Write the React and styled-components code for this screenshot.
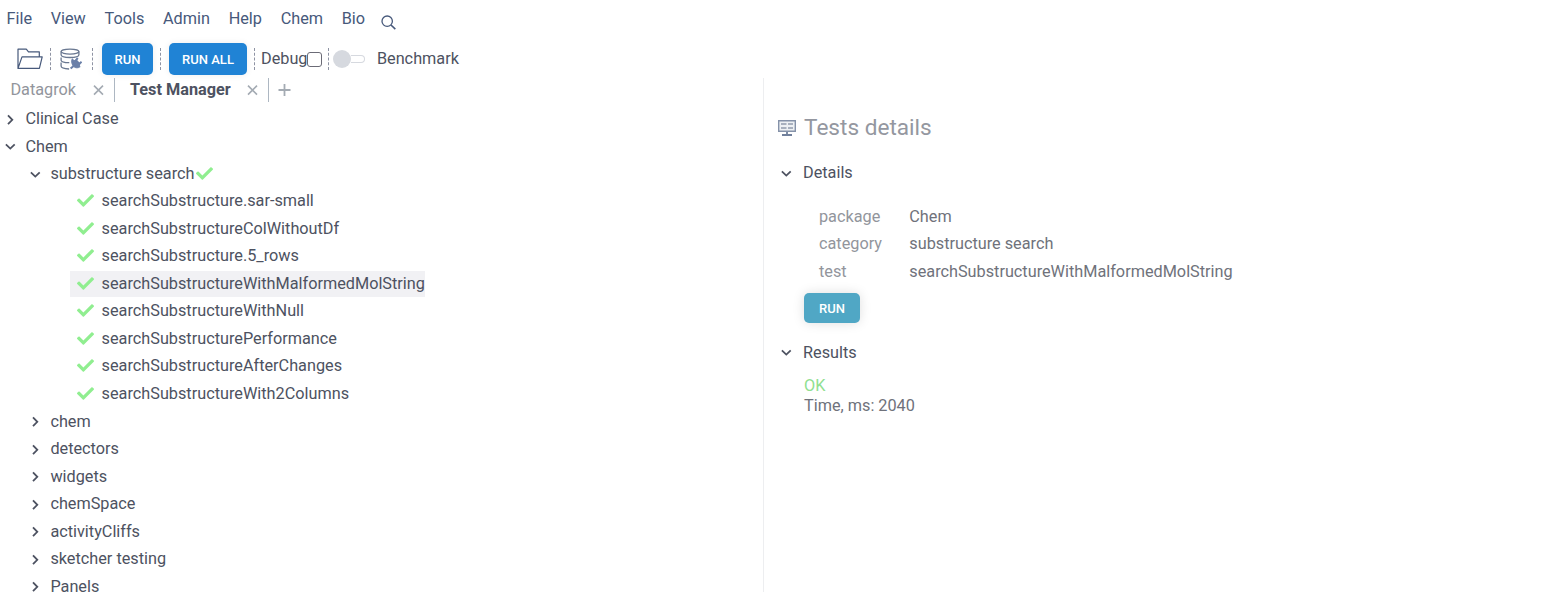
import React from 'react';
import styled, { createGlobalStyle } from 'styled-components';
import { FaCheck } from 'react-icons/fa';

const Global = createGlobalStyle`
  * { box-sizing: border-box; }
  body {
    margin: 0;
    background: #fff;
    color: #4d5261;
    font: 400 16.25px/20px Roboto, sans-serif;
    overflow: hidden;
  }
`;

const Page = styled.div`
  height: 592px;
  display: flex;
  flex-direction: column;
  overflow: hidden;
`;

const MenuBar = styled.nav`
  height: 37px;
  padding-left: 6.5px;
  display: flex;
  align-items: center;
  gap: 18.7px;
  color: #47597b;
`;

const SearchIcon = styled.svg`
  width: 15px;
  height: 15px;
  margin: 8px 0 0 -2.5px;
`;

const Toolbar = styled.div`
  height: 41px;
  padding: 3px 0 0 17px;
  display: flex;
  align-items: center;
`;

const Icon = styled.svg`
  flex: none;
  display: block;
  margin-left: ${(p) => p.$gap || 0}px;
`;

const Divider = styled.span`
  height: 22px;
  margin-left: ${(p) => p.$gap}px;
  border-left: 1px dashed #8e93a3;
`;

const Button = styled.button`
  height: ${(p) => p.$h || 32}px;
  width: ${(p) => p.$w}px;
  margin: ${(p) => p.$mt || 0}px 0 0 ${(p) => p.$gap || 0}px;
  padding: ${(p) => (p.$soft ? 2 : 1)}px 0 0;
  flex: none;
  border: 0;
  border-radius: 5px;
  background: ${(p) => p.$bg || '#2083d5'};
  color: #fff;
  font: 500 13px/16px Roboto, sans-serif;
  box-shadow: ${(p) => (p.$soft ? '0 0 12px rgba(0,0,0,.13)' : '0 0 7px rgba(0,0,0,.07)')};
`;

const ToolLabel = styled.span`
  margin-left: ${(p) => p.$gap}px;
`;

const CheckBox = styled.span`
  width: 15px;
  height: 15px;
  margin: 1px 0 0 -0.6px;
  border: 1px solid #6b6b76;
  border-radius: 3px;
`;

const Switch = styled.span`
  width: 32px;
  height: 18px;
  margin: 0 0 0 4px;
  display: flex;
  align-items: center;
`;

const Knob = styled.span`
  width: 18px;
  height: 18px;
  border-radius: 50%;
  background: #d6d9df;
`;

const Track = styled.span`
  width: 14px;
  height: 8px;
  border: 1px solid #d6d9df;
  border-left: 0;
  border-radius: 0 4px 4px 0;
`;

const Body = styled.div`
  flex: 1;
  display: flex;
  min-height: 0;
`;

const Left = styled.section`
  width: 764px;
  border-right: 1px solid #edeef0;
`;

const Tabs = styled.div`
  height: 27.4px;
  display: flex;
`;

const Tab = styled.div`
  width: ${(p) => p.$w}px;
  height: 24px;
  padding: 0 10px 0 ${(p) => p.$pl}px;
  display: flex;
  align-items: center;
  justify-content: space-between;
  border-right: 1px solid #adb7c2;
  color: ${(p) => (p.$active ? '#4d5261' : '#92959c')};
  font-weight: ${(p) => (p.$active ? 700 : 400)};
`;

const Row = styled.div`
  height: 27.53px;
  padding-left: ${(p) => p.$level * 25}px;
  display: flex;
  align-items: center;
  white-space: nowrap;
`;

const Arrow = styled.svg`
  width: 11px;
  height: 11px;
  margin: 0 ${(p) => p.$mr || 9.4}px 0 5px;
  flex: none;
  fill: none;
  stroke: #4d5261;
  stroke-width: 1.8;
`;

const Check = styled(FaCheck)`
  width: 17px;
  height: 17px;
  margin: 0 0 1px ${(p) => p.$gap || 0}px;
  flex: none;
  color: #90ee90;
`;

const Test = styled.div`
  height: 27.53px;
  width: max-content;
  margin-left: 70px;
  padding: 0 0 1px 6.6px;
  display: flex;
  align-items: center;
  gap: 8px;
  border-top: 1px solid #fff;
  border-bottom: 1px solid #fff;
  background: ${(p) => (p.$selected ? '#f1f1f4' : 'transparent')};
`;

const Details = styled.section`
  flex: 1;
  padding: 35px 0 0 14px;
`;

const Title = styled.h1`
  height: 30px;
  margin: 0;
  display: flex;
  align-items: center;
  gap: 8px;
  color: #9497a0;
  font: 400 22.6px/30px Roboto, sans-serif;
`;

const SectionHead = styled.div`
  height: 28px;
  margin-top: ${(p) => p.$mt}px;
  padding-left: 3px;
  display: flex;
  align-items: center;
  & > svg { margin-left: 0; }
`;

const Props = styled.dl`
  margin: 16px 0 0 41px;
  display: grid;
  grid-template-columns: 90.3px 1fr;
  grid-auto-rows: 27.5px;
  align-items: center;
`;

const Key = styled.dt`
  color: #92959c;
`;

const Value = styled.dd`
  margin: 0;
  color: #6f727b;
`;

const Result = styled.div`
  margin: 9px 0 0 26px;
  color: #6f727b;
`;

const Ok = styled.div`
  color: #90e090;
`;

const tests = [
  'searchSubstructure.sar-small',
  'searchSubstructureColWithoutDf',
  'searchSubstructure.5_rows',
  'searchSubstructureWithMalformedMolString',
  'searchSubstructureWithNull',
  'searchSubstructurePerformance',
  'searchSubstructureAfterChanges',
  'searchSubstructureWith2Columns',
];

const groups = ['chem', 'detectors', 'widgets', 'chemSpace', 'activityCliffs', 'sketcher testing', 'Panels'];

const Chevron = ({ open, mr }) => (
  <Arrow viewBox="0 0 11 11" $mr={mr}>
    <path d={open ? 'M.9 3.4l4.4 4.2L9.7 3.4' : 'M3 1.4l4.3 4.4L3 10.2'} />
  </Arrow>
);

const Close = () => (
  <Icon width="11" height="11" viewBox="0 0 11 11" stroke="#a4abb3" strokeWidth="1.6">
    <path d="M1 .6l9 9M10 .6l-9 9" />
  </Icon>
);

const FolderIcon = () => (
  <Icon width="26" height="22" viewBox="0 0 26 22" fill="none" stroke="#47597b" strokeWidth="1.2" strokeLinejoin="round">
    <path d="M1 20.4V1.2h8.3l2.2 2.6h10.8v5.1M1 20.4L5 8.9h20.2l-2.8 11.5z" />
  </Icon>
);

const DatabaseIcon = () => (
  <Icon $gap={9} width="22" height="23" viewBox="0 0 22 23" fill="none" stroke="#6a7891" strokeWidth="1.3">
    <ellipse cx="10" cy="3.6" rx="8.9" ry="2.5" />
    <path d="M1.1 3.6v3.2c0 1.6 3.2 2.7 8.9 2.7 5.4 0 8.9-1.2 8.9-2.7V3.6M1.1 9.4v2.8c0 1.4 3.2 2.4 8.2 2.5M1.1 14.6v3.4c0 1.6 3 2.8 8 3" />
    <path d="M12.2 10.8l8 7.8c-1.9 1.7-4.7 1.6-6.4 0-1.8-1.8-2.8-4.8-1.6-7.8z" fill="#6a7fa8" stroke="#6a7fa8" strokeWidth="1" />
    <path d="M13.2 12.6l3.4-1 3.8 3.8-.8 3.2z" fill="#6a7fa8" stroke="none" />
    <path d="M15.4 12.8l2.4-2.8M18.8 16.2l2.8-2.4M13.6 18l-3 2.6" stroke="#6a7fa8" strokeWidth="2" />
  </Icon>
);

const MonitorIcon = () => (
  <Icon width="18" height="16" viewBox="0 0 18 16">
    <path d="M.7.7h16.6v10.6H.7z" fill="#edf0f3" stroke="#8592a9" strokeWidth="1.4" />
    <path d="M3 4h5.5M10 4h5M3 8h5.5M10 8h5" stroke="#a8b0be" strokeWidth="2" />
    <path d="M9 12v3M4 15h10" stroke="#71809c" strokeWidth="1.8" />
  </Icon>
);

export default function App() {
  return (
    <Page>
      <Global />
      <MenuBar>
        {['File', 'View', 'Tools', 'Admin', 'Help', 'Chem', 'Bio'].map((m) => <span key={m}>{m}</span>)}
        <SearchIcon viewBox="0 0 15 15" fill="none" stroke="#47597b" strokeWidth="1.3">
          <circle cx="6.2" cy="6.2" r="5.2" />
          <path d="M10 10l4.3 4.1" strokeWidth="1.6" />
        </SearchIcon>
      </MenuBar>
      <Toolbar>
        <FolderIcon />
        <Divider $gap={7} />
        <DatabaseIcon />
        <Divider $gap={10} />
        <Button $gap={9} $w={51}>RUN</Button>
        <Divider $gap={7} />
        <Button $gap={8} $w={78}>RUN ALL</Button>
        <Divider $gap={7} />
        <ToolLabel $gap={6}>Debug</ToolLabel>
        <CheckBox />
        <Divider $gap={6} />
        <Switch><Knob /><Track /></Switch>
        <ToolLabel $gap={12}>Benchmark</ToolLabel>
      </Toolbar>
      <Body>
        <Left>
          <Tabs>
            <Tab $w={115} $pl={10.4}>Datagrok<Close /></Tab>
            <Tab $w={154} $pl={15} $active>Test Manager<Close /></Tab>
            <Icon $gap={9} width="14" height="24" viewBox="0 0 14 24" stroke="#a4abb3" strokeWidth="1.8">
              <path d="M.5 12h12M6.5 6v12" />
            </Icon>
          </Tabs>
          <Row $level={0}><Chevron />Clinical Case</Row>
          <Row $level={0}><Chevron open />Chem</Row>
          <Row $level={1}><Chevron open />substructure search<Check $gap={1.5} /></Row>
          {tests.map((t, i) => <Test key={t} $selected={i === 3}><Check />{t}</Test>)}
          {groups.map((g) => <Row key={g} $level={1}><Chevron />{g}</Row>)}
        </Left>
        <Details>
          <Title><MonitorIcon />Tests details</Title>
          <SectionHead $mt={16}><Chevron open mr={11} />Details</SectionHead>
          <Props>
            <Key>package</Key><Value>Chem</Value>
            <Key>category</Key><Value>substructure search</Value>
            <Key>test</Key><Value>searchSubstructureWithMalformedMolString</Value>
          </Props>
          <Button $mt={7} $gap={26} $w={56} $h={30} $bg="#50a7c5" $soft>RUN</Button>
          <SectionHead $mt={16}><Chevron open mr={11} />Results</SectionHead>
          <Result><Ok>OK</Ok>Time, ms: 2040</Result>
        </Details>
      </Body>
    </Page>
  );
}
